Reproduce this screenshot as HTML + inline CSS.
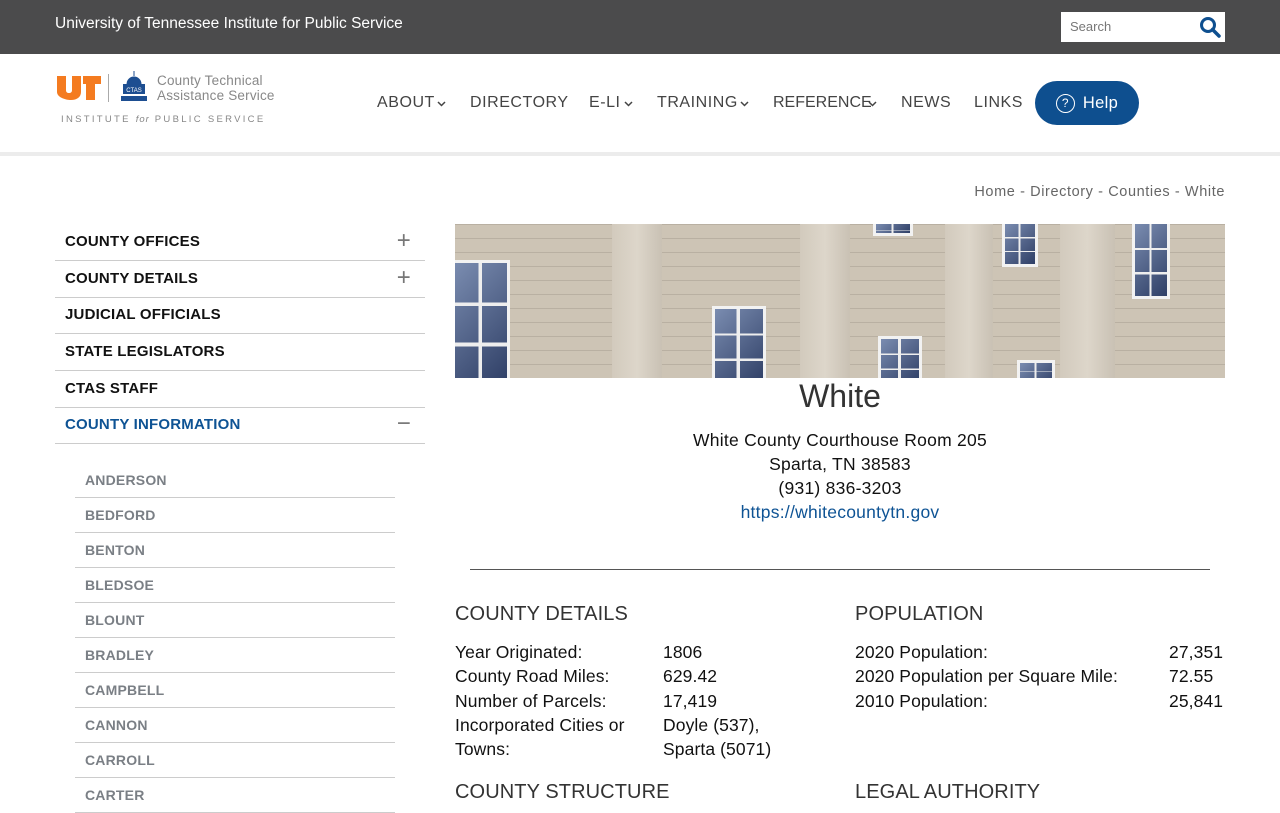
<!DOCTYPE html>
<html><head><meta charset="utf-8"><style>
*{margin:0;padding:0;box-sizing:border-box}
body{width:1280px;height:800px;overflow:hidden;background:#fff;font-family:"Liberation Sans",sans-serif;position:relative}
.a{position:absolute}
.top{left:0;top:0;width:1280px;height:54px;background:#4b4b4c}
.nav span{position:absolute;top:94px;font-size:16px;letter-spacing:0.55px;color:#444}
.chev{position:absolute;top:101px}
.si{position:absolute;left:55px;width:370px;height:37px;border-bottom:1px solid #ccc;font-weight:bold;font-size:15px;letter-spacing:0.2px;padding:9px 10px;color:#111}
.pl{position:absolute;right:14px;top:7px;font-weight:normal;font-size:24px;color:#777;line-height:20px}
.ci{position:absolute;left:75px;width:320px;height:35px;border-bottom:1px solid #ccc;font-weight:bold;font-size:14px;letter-spacing:0.2px;color:#7a7f85;padding:9px 10px}
.img{left:455px;top:224px;width:770px;height:154px;background:repeating-linear-gradient(0deg,#cdc4b5 0 13px,#b9b0a2 13px 14px),linear-gradient(90deg,#c9bfb0,#d6cdbf);overflow:hidden}
.pil{position:absolute;top:0;height:154px;background:linear-gradient(90deg,#d2cabd,#ddd6ca,#c9c1b4);}
.win{position:absolute;background:#4a5d85;border:3px solid #f2f2f2;background-image:linear-gradient(90deg,transparent 45%,#eee 45%,#eee 52%,transparent 52%),linear-gradient(0deg,transparent 30%,#eee 30%,#eee 33%,transparent 33%,transparent 64%,#eee 64%,#eee 67%,transparent 67%),linear-gradient(135deg,#7a8cb0,#2f3f66)}
.t{font-size:17.5px;color:#111;letter-spacing:0.1px}
h3{position:absolute;font-weight:normal;font-size:20px;color:#333;letter-spacing:0.1px}
</style></head><body>
<div class="a top"></div>
<div class="a" style="left:55px;top:15px;color:#fff;font-size:15.5px">University of Tennessee Institute for Public Service</div>
<div class="a" style="left:1061px;top:12px;width:164px;height:30px;background:#fff"></div>
<div class="a" style="left:1070px;top:19px;font-size:13px;color:#777">Search</div>
<svg class="a" style="left:1199px;top:16px" width="22" height="22" viewBox="0 0 22 22"><circle cx="9" cy="9" r="6.5" fill="none" stroke="#0e4f8f" stroke-width="3"/><line x1="13.5" y1="13.5" x2="20" y2="20" stroke="#0e4f8f" stroke-width="3.5" stroke-linecap="round"/></svg>
<svg class="a" style="left:57px;top:76px" width="44" height="24" viewBox="0 0 44 24"><path d="M0 0h9v14c0 2 1 3 3 3s3-1 3-3V0h9v16c0 5-4 8-10 8S0 21 0 16z" fill="#f47b20"/><path d="M26 0h18v8h-6v16h-9V8h-3z" fill="#f47b20"/></svg>
<div class="a" style="left:108px;top:74px;width:1px;height:28px;background:#aaa"></div>
<svg class="a" style="left:119px;top:70px" width="30" height="32" viewBox="0 0 30 32"><path d="M15 1v5M8 14a7 7 0 0 1 14 0z" fill="#1d4e91" stroke="#1d4e91"/><rect x="4" y="14" width="22" height="10" fill="#1d4e91"/><rect x="2" y="26" width="26" height="5" fill="#1d4e91"/><text x="15" y="22" font-size="6" fill="#fff" text-anchor="middle" font-family="Liberation Sans">CTAS</text></svg>
<div class="a" style="left:157px;top:73px;font-size:13.5px;color:#888;line-height:15px;letter-spacing:0.2px">County Technical<br>Assistance Service</div>
<div class="a" style="left:61px;top:114px;font-size:9.5px;color:#888;letter-spacing:2.3px">INSTITUTE <i style="letter-spacing:1px">for</i> PUBLIC SERVICE</div>
<div class="nav">
<span style="left:377px">ABOUT</span><span style="left:470px">DIRECTORY</span><span style="left:589px">E-LI</span><span style="left:657px">TRAINING</span><span style="left:773px;letter-spacing:0">REFERENCE</span><span style="left:901px">NEWS</span><span style="left:974px">LINKS</span></div>
<svg class="chev" style="left:437px" width="9" height="6" viewBox="0 0 9 6"><path d="M1 1l3.5 3.5L8 1" fill="none" stroke="#444" stroke-width="1.5"/></svg>
<svg class="chev" style="left:624px" width="9" height="6" viewBox="0 0 9 6"><path d="M1 1l3.5 3.5L8 1" fill="none" stroke="#444" stroke-width="1.5"/></svg>
<svg class="chev" style="left:740px" width="9" height="6" viewBox="0 0 9 6"><path d="M1 1l3.5 3.5L8 1" fill="none" stroke="#444" stroke-width="1.5"/></svg>
<svg class="chev" style="left:868px" width="9" height="6" viewBox="0 0 9 6"><path d="M1 1l3.5 3.5L8 1" fill="none" stroke="#444" stroke-width="1.5"/></svg>
<div class="a" style="left:1035px;top:81px;width:104px;height:44px;border-radius:22px;background:#0e4f8f;color:#fff;font-size:16.5px;display:flex;align-items:center;justify-content:center;letter-spacing:0.3px"><span style="display:inline-block;width:19px;height:19px;border:1.5px solid #fff;border-radius:50%;font-size:12px;text-align:center;line-height:16px;margin-right:8px">?</span>Help</div>
<div class="a" style="left:0;top:152px;width:1280px;height:4px;background:#ececec"></div>
<div class="a" style="right:55px;top:184px;font-size:14.5px;color:#666;letter-spacing:0.6px">Home - Directory - Counties - White</div>
<div class="si" style="top:224px">COUNTY OFFICES<span class="pl">+</span></div>
<div class="si" style="top:261px">COUNTY DETAILS<span class="pl">+</span></div>
<div class="si" style="top:297px">JUDICIAL OFFICIALS</div>
<div class="si" style="top:334px">STATE LEGISLATORS</div>
<div class="si" style="top:371px">CTAS STAFF</div>
<div class="si" style="top:407px;color:#0e5394">COUNTY INFORMATION<span class="pl">−</span></div>
<div class="ci" style="top:463px">ANDERSON</div>
<div class="ci" style="top:498px">BEDFORD</div>
<div class="ci" style="top:533px">BENTON</div>
<div class="ci" style="top:568px">BLEDSOE</div>
<div class="ci" style="top:603px">BLOUNT</div>
<div class="ci" style="top:638px">BRADLEY</div>
<div class="ci" style="top:673px">CAMPBELL</div>
<div class="ci" style="top:708px">CANNON</div>
<div class="ci" style="top:743px">CARROLL</div>
<div class="ci" style="top:778px">CARTER</div>
<div class="a img">
<div class="pil" style="left:157px;width:50px"></div>
<div class="pil" style="left:345px;width:50px"></div>
<div class="pil" style="left:490px;width:48px"></div>
<div class="pil" style="left:605px;width:55px"></div>
<div class="win" style="left:-3px;top:36px;width:58px;height:125px"></div>
<div class="win" style="left:257px;top:82px;width:54px;height:80px"></div>
<div class="win" style="left:423px;top:112px;width:44px;height:50px"></div>
<div class="win" style="left:562px;top:136px;width:38px;height:30px"></div>
<div class="win" style="left:418px;top:-3px;width:40px;height:15px"></div>
<div class="win" style="left:547px;top:-3px;width:36px;height:46px"></div>
<div class="win" style="left:677px;top:-3px;width:38px;height:78px"></div>
</div>
<div class="a" style="left:455px;width:770px;top:378px;text-align:center;font-size:32px;color:#333">White</div>
<div class="a t" style="left:455px;width:770px;top:428px;text-align:center;line-height:24px;letter-spacing:0.25px">White County Courthouse Room 205<br>Sparta, TN 38583<br>(931) 836-3203<br><span style="color:#0e5394">https://whitecountytn.gov</span></div>
<div class="a" style="left:470px;top:569px;width:740px;height:1px;background:#555"></div>
<h3 style="left:455px;top:603px">COUNTY DETAILS</h3>
<h3 style="left:855px;top:603px">POPULATION</h3>
<div class="a t" style="left:455px;top:640px;line-height:24.3px">Year Originated:<br>County Road Miles:<br>Number of Parcels:<br>Incorporated Cities or<br>Towns:</div>
<div class="a t" style="left:663px;top:640px;line-height:24.3px">1806<br>629.42<br>17,419<br>Doyle (537),<br>Sparta (5071)</div>
<div class="a t" style="left:855px;top:640px;line-height:24.3px">2020 Population:<br>2020 Population per Square Mile:<br>2010 Population:</div>
<div class="a t" style="left:1169px;top:640px;line-height:24.3px">27,351<br>72.55<br>25,841</div>
<h3 style="left:455px;top:781px">COUNTY STRUCTURE</h3>
<h3 style="left:855px;top:781px">LEGAL AUTHORITY</h3>
</body></html>
